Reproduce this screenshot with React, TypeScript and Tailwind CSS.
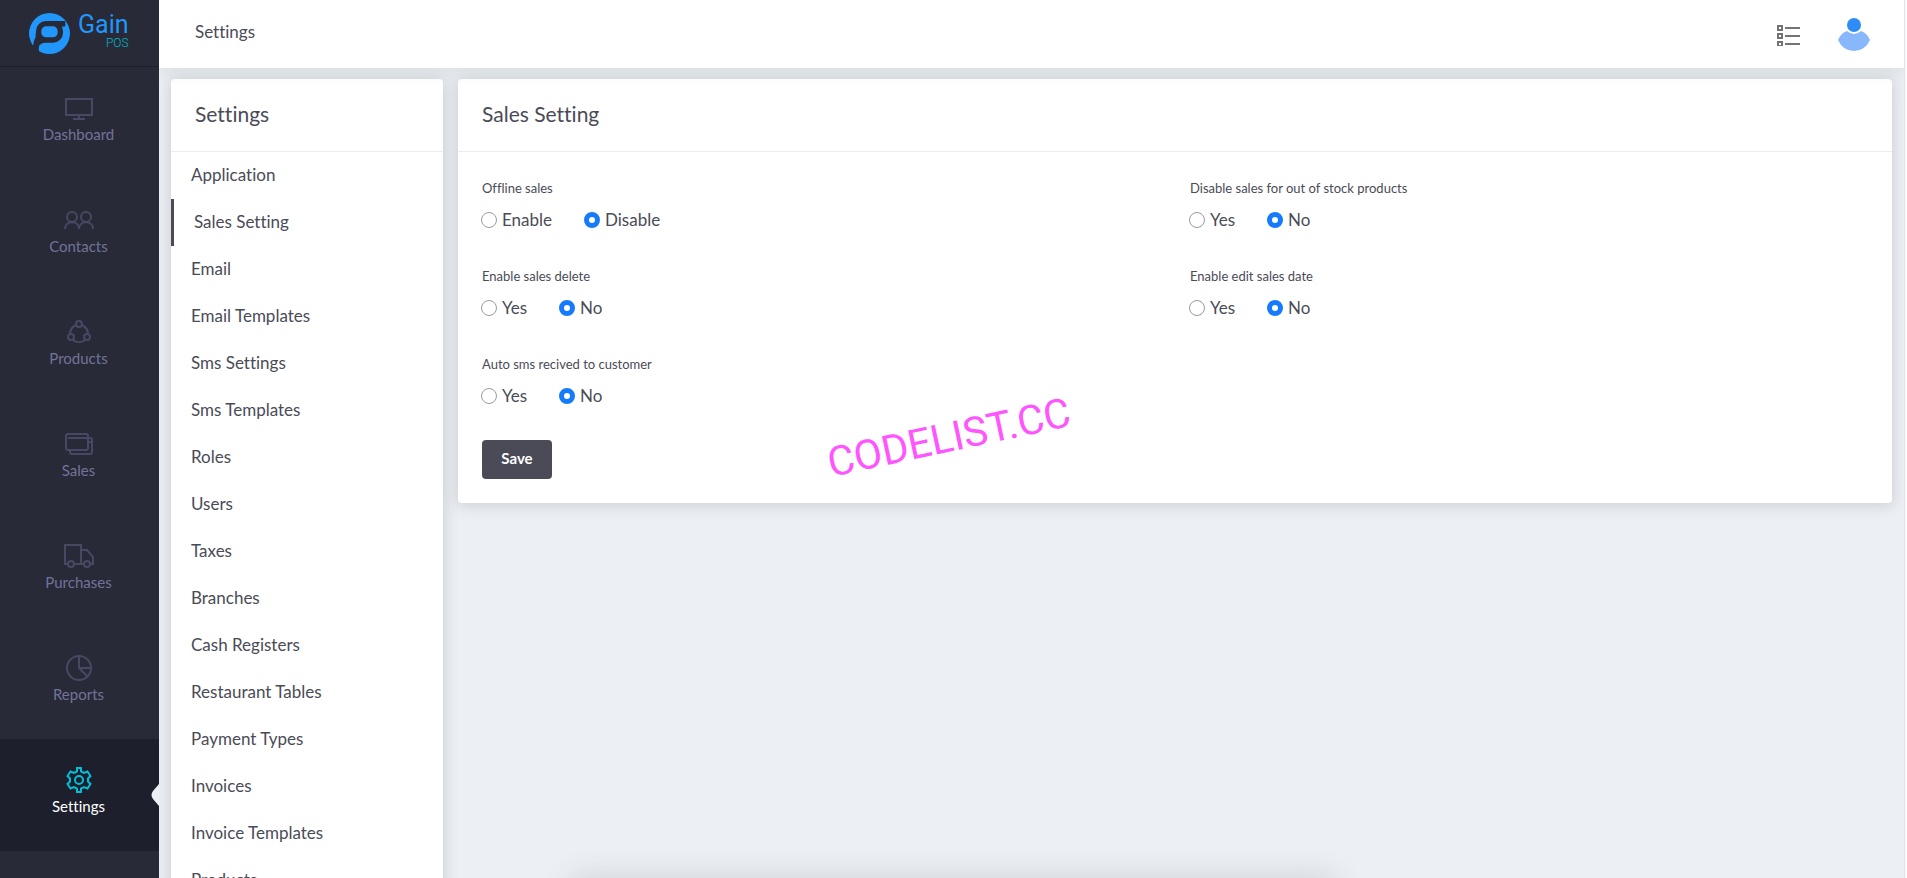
import type { ReactNode } from "react";

const stroke = {
  fill: "none",
  stroke: "currentColor",
  strokeWidth: 2,
} as const;

const navItems: { label: string; icon: ReactNode }[] = [
  {
    label: "Dashboard",
    icon: (
      <>
        <path d="M2 5h26v16H2zM15 21v3M9 25h12" />
      </>
    ),
  },
  {
    label: "Contacts",
    icon: (
      <>
        <circle cx="8" cy="11" r="5" />
        <circle cx="22" cy="11" r="5" />
        <path d="M1 23c0-9 14-9 14 0c0-9 14-9 14 0" />
      </>
    ),
  },
  {
    label: "Products",
    icon: (
      <>
        <circle cx="15" cy="6" r="3" />
        <circle cx="7" cy="19" r="3" />
        <circle cx="23" cy="19" r="3" />
        <path d="M12 7a10 10 0 0 0-6 9M18 7a10 10 0 0 1 6 9M9 22a10 10 0 0 0 12 0" />
      </>
    ),
  },
  {
    label: "Sales",
    icon: (
      <>
        <rect x="2" y="4" width="22" height="16" rx="2" />
        <path d="M4 8h20M6 20v2a2 2 0 0 0 2 2h18a2 2 0 0 0 2-2V10a2 2 0 0 0-2-2h-2M24 12h3" />
      </>
    ),
  },
  {
    label: "Purchases",
    icon: (
      <>
        <path d="M4 22H1V3h16v19H10M17 8h6l6 7v7h-3M17 22h3" />
        <circle cx="7" cy="22" r="3" />
        <circle cx="23" cy="22" r="3" />
      </>
    ),
  },
  {
    label: "Reports",
    icon: (
      <>
        <circle cx="15" cy="14" r="12" />
        <path d="M15 2v12h12M15 14l8 8" />
      </>
    ),
  },
  {
    label: "Settings",
    icon: (
      <>
        <circle cx="15" cy="14" r="4" />
        <path d="M13 2h4v3.500l3 1.500l3.500-1.500l3 4.500l-2.500 2.500v3l2.500 2.500l-3 4.500l-3.500-1.500l-3 1.500V26h-4v-3.500l-3-1.500l-3.500 1.500l-3-4.500l2.500-2.500v-3l-2.500-2.500l3-4.500l3.500 1.500l3-1.500z" />
      </>
    ),
  },
];

const settingsMenu = [
  "Application",
  "Sales Setting",
  "Email",
  "Email Templates",
  "Sms Settings",
  "Sms Templates",
  "Roles",
  "Users",
  "Taxes",
  "Branches",
  "Cash Registers",
  "Restaurant Tables",
  "Payment Types",
  "Invoices",
  "Invoice Templates",
  "Products",
];

const fields = [
  { name: "offline", label: "Offline sales", options: ["Enable", "Disable"] },
  { name: "stock", label: "Disable sales for out of stock products", options: ["Yes", "No"] },
  { name: "delete", label: "Enable sales delete", options: ["Yes", "No"] },
  { name: "date", label: "Enable edit sales date", options: ["Yes", "No"] },
  { name: "sms", label: "Auto sms recived to customer", options: ["Yes", "No"] },
];

function Logo() {
  return (
    <a href="#home" className="flex h-[67px] shrink-0 items-center gap-2 border-b border-[#1e1f2c] pl-[29px] font-['Roboto',sans-serif]">
      <svg viewBox="0 0 123 123" className="size-[41px]" aria-hidden="true">
        <circle cx="61.500" cy="61.500" r="61.500" fill="#2196fb" />
        <path d="M20 60L20 72Q14 82 12 99L0 118L33 123Q26 106 32 96Q38 90 52 88z" fill="#282a37" />
        <rect x="29" y="32" width="65" height="49" rx="22" fill="none" stroke="#282a37" strokeWidth="16" />
        <path d="M72 24H109V40L97 41L80 36z" fill="#282a37" />
      </svg>
      <span className="flex flex-col items-end pb-1">
        <span className="text-[25px] leading-6 text-[#2196fb]">Gain</span>
        <span className="text-xs leading-3 font-light text-[#00b8c4]">POS</span>
      </span>
    </a>
  );
}

function Sidebar() {
  return (
    <aside className="flex w-[159px] shrink-0 flex-col overflow-hidden bg-[#282a37]">
      <Logo />
      <nav>
        {navItems.map(({ label, icon }) => {
          const active = label === "Settings";
          return (
            <a
              key={label}
              href={`#${label}`}
              className={`relative flex h-[112px] flex-col items-center pt-[27px] pr-0.5 text-[15px] leading-5 ${
                active ? "bg-[#1e1f2c] text-white" : "text-[#72739a]"
              }`}
            >
              <svg viewBox="0 0 30 30" {...stroke} className={`size-[30px] ${active ? "text-[#00c0d8]" : "text-[#474964]"}`} aria-hidden="true">
                {icon}
              </svg>
              {label}
              {active && (
                <svg viewBox="0 0 8 22" className="absolute top-[45px] right-0 h-[22px] w-2" aria-hidden="true">
                  <path d="M8 0L2 7Q-1 11 2 15L8 22z" fill="#ecf0f4" />
                </svg>
              )}
            </a>
          );
        })}
      </nav>
    </aside>
  );
}

function Header() {
  return (
    <header className="z-10 flex h-[68px] shrink-0 items-center justify-between bg-white pr-[33px] pl-9 shadow-[0_1px_15px_1px_rgba(69,65,78,0.12)]">
      <h1 className="pb-1 text-[17px]">Settings</h1>
      <div className="flex items-center gap-[37px]">
        <button type="button" aria-label="Tasks">
          <svg viewBox="0 0 24 24" className="size-6" fill="none" stroke="#737373" strokeWidth="2" aria-hidden="true">
            <path d="M2 4h4v4H2zM2 12h4v4H2zM2 20h4v4H2zM9 6h15M9 14h15M9 22h15" />
          </svg>
        </button>
        <button type="button" aria-label="Account">
          <svg viewBox="0 0 34 34" className="size-[34px]" aria-hidden="true">
            <path d="M1 23Q4 16 10 14Q17 20 24 14Q30 16 33 23Q28 34 17 34Q6 34 1 23z" fill="#88b8fb" />
            <circle cx="17" cy="8" r="7" fill="#2d8cf7" />
          </svg>
        </button>
      </div>
    </header>
  );
}

function SettingsMenu() {
  return (
    <section className="w-[272px] shrink-0 rounded bg-white shadow-[0_1px_15px_1px_rgba(69,65,78,0.2)]">
      <h2 className="flex h-[73px] items-center border-b border-[#ebecf0] px-6 pb-0.5 text-[21px]">Settings</h2>
      <ul>
        {settingsMenu.map((item) => (
          <li key={item}>
            <a
              href={`#${item}`}
              className={`flex h-[47px] items-center px-5 pb-0.5 text-[17px] ${item === "Sales Setting" ? "border-l-3 border-[#4a4b57]" : ""}`}
            >
              {item}
            </a>
          </li>
        ))}
      </ul>
    </section>
  );
}

function RadioField({ name, label, options }: (typeof fields)[number]) {
  return (
    <fieldset className="h-[88px]">
      <legend className="text-[13px] leading-6">{label}</legend>
      <div className="-ml-px flex gap-8 pt-2">
        {options.map((option, index) => (
          <label key={option} className="flex items-center gap-[5px] text-[17px] leading-6">
            <input
              type="radio"
              name={name}
              defaultChecked={index === 1}
              className="size-4 appearance-none rounded-full border border-[#9a9a9a] bg-white checked:border-5 checked:border-[#167bfb]"
            />
            {option}
          </label>
        ))}
      </div>
    </fieldset>
  );
}

function SalesSetting() {
  return (
    <form className="relative min-w-0 flex-1 rounded bg-white shadow-[0_1px_15px_1px_rgba(69,65,78,0.2)]">
      <h2 className="flex h-[73px] items-center border-b border-[#ebecf0] px-6 pb-0.5 text-[21px]">Sales Setting</h2>
      <div className="p-6">
        <div className="grid grid-cols-2 gap-x-[30px]">
          {fields.map((field) => (
            <RadioField key={field.name} {...field} />
          ))}
        </div>
        <button type="button" className="h-[39px] w-[70px] rounded bg-[#4a4b57] pb-0.5 text-[15px] font-bold text-white">
          Save
        </button>
      </div>
      <p className="pointer-events-none absolute top-[359px] left-[491px] -translate-x-1/2 -translate-y-1/2 -rotate-12 font-['Roboto',sans-serif] text-[41px] leading-none whitespace-nowrap text-[#ff55ff]">
        CODELIST.CC
      </p>
    </form>
  );
}

export default function App() {
  return (
    <div className="relative flex h-screen overflow-hidden bg-[#ecf0f4] font-['Lato',sans-serif] text-[#4a4b57] [font-variant-ligatures:no-common-ligatures]">
      <Sidebar />
      <div className="flex min-w-0 flex-1 flex-col overflow-hidden">
        <Header />
        <main className="flex min-h-0 flex-1 items-start gap-[15px] pt-[11px] pr-3 pl-3">
          <SettingsMenu />
          <SalesSetting />
        </main>
      </div>
      <div className="w-[3px] shrink-0 border-l border-[#e4e4e8] bg-[#fafafa]" />
      <div className="absolute top-full left-[30%] h-10 w-[40%] shadow-[0_0_30px_rgba(69,65,78,0.18)]" />
    </div>
  );
}
